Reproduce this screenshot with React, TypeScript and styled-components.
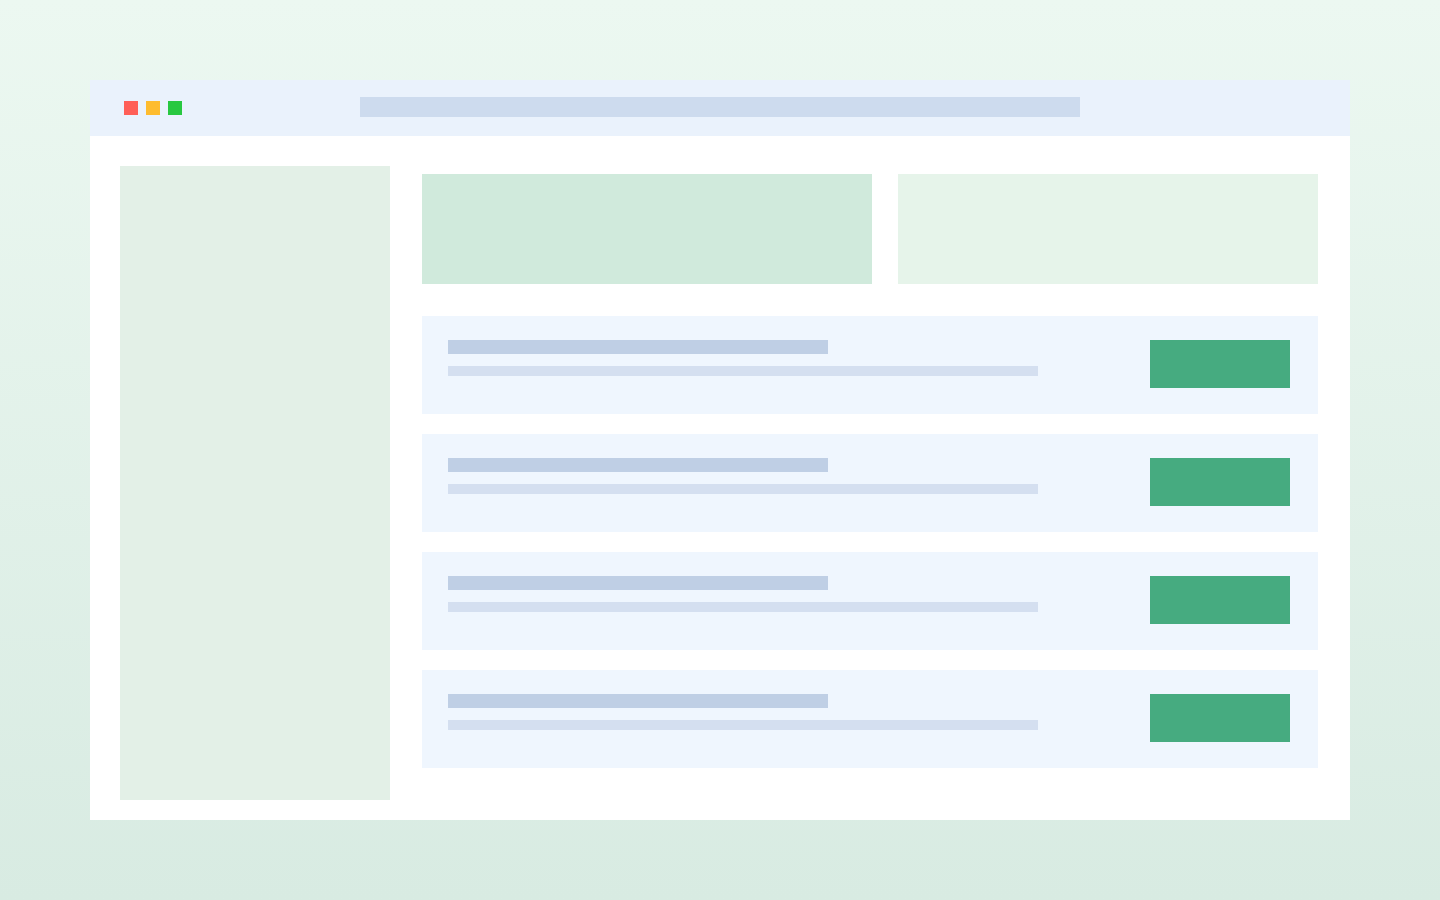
import styled, { createGlobalStyle } from 'styled-components';

const GlobalStyle = createGlobalStyle`
  html, body {
    margin: 0;
    padding: 0;
  }
  body {
    font-family: 'Inter', 'Liberation Sans', sans-serif;
  }
  * {
    box-sizing: border-box;
  }
`;

const DOTS = ['#ff5f57', '#febc2e', '#28c840'];
const ROWS = [1, 2, 3, 4];

const App = () => {
  return (
    <>
      <GlobalStyle />
      <Page>
        <Window>
          <TitleBar>
            <Dots>
              {DOTS.map((color) => (
                <Dot key={color} $color={color} />
              ))}
            </Dots>
            <AddressBar />
          </TitleBar>
          <Content>
            <Sidebar />
            <Main>
              <Cards>
                <Card $color="#d0eadc" />
                <Card $color="#e6f4ea" />
              </Cards>
              <Rows>
                {ROWS.map((id) => (
                  <Row key={id}>
                    <RowText>
                      <TitleLine />
                      <SubLine />
                    </RowText>
                    <ActionButton type="button" aria-label="action" />
                  </Row>
                ))}
              </Rows>
            </Main>
          </Content>
        </Window>
      </Page>
    </>
  );
};

export default App;

const Page = styled.div`
  width: 1440px;
  height: 900px;
  padding: 80px 90px;
  background: linear-gradient(180deg, #ecf8f1 0%, #d8ebe2 100%);
`;

const Window = styled.div`
  width: 1260px;
  height: 740px;
  background: #ffffff;
  display: flex;
  flex-direction: column;
`;

const TitleBar = styled.div`
  height: 56px;
  background: #eaf2fc;
  display: grid;
  grid-template-columns: 1fr 720px 1fr;
  align-items: center;
`;

const Dots = styled.div`
  display: flex;
  gap: 8px;
  padding-left: 34px;
`;

const Dot = styled.span<{ $color: string }>`
  width: 14px;
  height: 14px;
  background: ${({ $color }) => $color};
`;

const AddressBar = styled.div`
  height: 20px;
  margin-bottom: 2px;
  background: #cddbee;
`;

const Content = styled.div`
  flex: 1;
  display: flex;
  gap: 32px;
  padding: 30px 32px 20px 30px;
`;

const Sidebar = styled.aside`
  width: 270px;
  flex-shrink: 0;
  background: #e3f0e7;
`;

const Main = styled.main`
  flex: 1;
  padding-top: 8px;
  display: flex;
  flex-direction: column;
  gap: 32px;
`;

const Cards = styled.div`
  display: grid;
  grid-template-columns: 450px 1fr;
  gap: 26px;
`;

const Card = styled.div<{ $color: string }>`
  height: 110px;
  background: ${({ $color }) => $color};
`;

const Rows = styled.div`
  display: flex;
  flex-direction: column;
  gap: 20px;
`;

const Row = styled.div`
  height: 98px;
  padding: 24px 28px 24px 26px;
  background: #eff6fe;
  display: flex;
  justify-content: space-between;
  align-items: flex-start;
`;

const RowText = styled.div`
  display: flex;
  flex-direction: column;
  gap: 12px;
`;

const TitleLine = styled.div`
  width: 380px;
  height: 14px;
  background: #bfcfe5;
`;

const SubLine = styled.div`
  width: 590px;
  height: 10px;
  background: #d4dff0;
`;

const ActionButton = styled.button`
  width: 140px;
  height: 48px;
  border: none;
  padding: 0;
  background: #46ab80;
  cursor: pointer;
`;
